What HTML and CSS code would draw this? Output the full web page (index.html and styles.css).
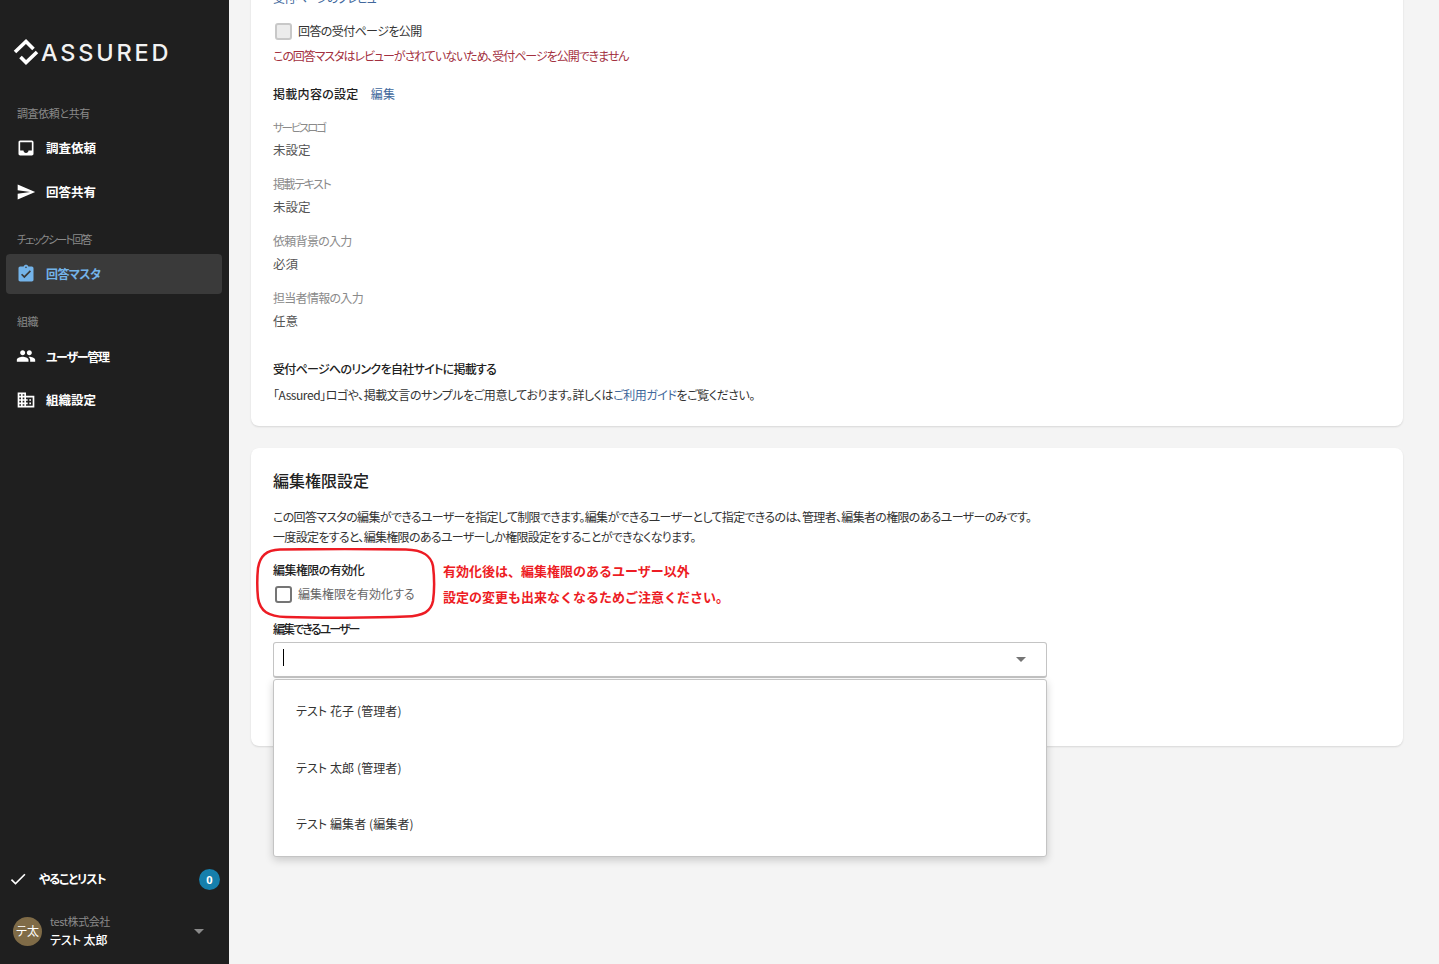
FILE: index.html
```html
<!DOCTYPE html>
<html lang="ja">
<head>
<meta charset="utf-8">
<title>回答マスタ</title>
<link rel="stylesheet" href="styles.css">
</head>
<body>
<div class="app">
  <aside class="sidebar">
    <div class="logo">
      <svg class="logo-mark" viewBox="0 0 26 26" width="26" height="26"><path d="M2 13 13 2.500 20.500 10M7.500 18 13 23.500 24 13" fill="none" stroke="#fff" stroke-width="3.6"/></svg>
      <span class="logo-text">ASSURED</span>
    </div>
    <nav class="nav">
      <div class="nav-label first">調査依頼と共有</div>
      <a class="nav-item"><svg class="nav-icon" viewBox="0 0 24 24"><path d="M19 3H4.99c-1.11 0-1.98.89-1.98 2L3 19c0 1.1.88 2 1.99 2H19c1.1 0 2-.9 2-2V5c0-1.11-.9-2-2-2zm0 12h-4c0 1.66-1.35 3-3 3s-3-1.34-3-3H4.99V5H19v10z"/></svg><span class="nav-text">調査依頼</span></a>
      <a class="nav-item"><svg class="nav-icon" viewBox="0 0 24 24"><path d="M2.01 21L23 12 2.01 3 2 10l15 2-15 2z"/></svg><span class="nav-text">回答共有</span></a>
      <div class="nav-label kana">チェックシート回答</div>
      <a class="nav-item active"><svg class="nav-icon" viewBox="0 0 24 24"><path d="M19 3h-4.18C14.4 1.84 13.3 1 12 1c-1.3 0-2.4.84-2.82 2H5c-1.1 0-2 .9-2 2v14c0 1.1.9 2 2 2h14c1.1 0 2-.9 2-2V5c0-1.1-.9-2-2-2zm-7 0c.55 0 1 .45 1 1s-.45 1-1 1-1-.45-1-1 .45-1 1-1zm-2 14l-4-4 1.41-1.41L10 14.17l6.59-6.59L18 9l-8 8z"/></svg><span class="nav-text master">回答マスタ</span></a>
      <div class="nav-label org">組織</div>
      <a class="nav-item"><svg class="nav-icon" viewBox="0 0 24 24"><path d="M16 11c1.66 0 2.99-1.34 2.99-3S17.66 5 16 5c-1.66 0-3 1.34-3 3s1.34 3 3 3zm-8 0c1.66 0 2.99-1.34 2.99-3S9.66 5 8 5C6.34 5 5 6.34 5 8s1.34 3 3 3zm0 2c-2.33 0-7 1.17-7 3.5V19h14v-2.5c0-2.33-4.67-3.5-7-3.5zm8 0c-.29 0-.62.02-.97.05 1.16.84 1.97 1.97 1.97 3.45V19h6v-2.5c0-2.33-4.67-3.5-7-3.5z"/></svg><span class="nav-text users-text">ユーザー管理</span></a>
      <a class="nav-item"><svg class="nav-icon" viewBox="0 0 24 24"><path d="M12 7V3H2v18h20V7H12zM6 19H4v-2h2v2zm0-4H4v-2h2v2zm0-4H4V9h2v2zm0-4H4V5h2v2zm4 12H8v-2h2v2zm0-4H8v-2h2v2zm0-4H8V9h2v2zm0-4H8V5h2v2zm10 12h-8v-2h2v-2h-2v-2h2v-2h-2V9h8v10zm-2-8h-2v2h2v-2zm0 4h-2v2h2v-2z"/></svg><span class="nav-text">組織設定</span></a>
    </nav>
    <div class="side-bottom">
      <div class="todo">
        <svg class="todo-icon" viewBox="0 0 24 24"><path d="M9 16.17L4.83 12l-1.41 1.41L9 19 21 7l-1.41-1.41z"/></svg>
        <span class="todo-text">やることリスト</span>
        <span class="badge">0</span>
      </div>
      <div class="account">
        <span class="avatar">テ太</span>
        <div class="account-text">
          <div class="company">test株式会社</div>
          <div class="person">テスト 太郎</div>
        </div>
        <span class="caret caret-side"></span>
      </div>
    </div>
  </aside>
  <main class="main">
    <section class="card card-top">
      <a class="link clipped">受付ページのプレビュー</a>
      <label class="check-row publish-row"><span class="box disabled"></span><span class="check-label publish">回答の受付ページを公開</span></label>
      <p class="error">この回答マスタはレビューがされていないため、受付ページを公開できません</p>
      <div class="heading-row"><strong class="sub">掲載内容の設定</strong><a class="link edit">編集</a></div>
      <dl class="fields">
        <div class="field"><dt class="kana-logo">サービスロゴ</dt><dd>未設定</dd></div>
        <div class="field"><dt class="kana-text">掲載テキスト</dt><dd>未設定</dd></div>
        <div class="field"><dt>依頼背景の入力</dt><dd>必須</dd></div>
        <div class="field"><dt>担当者情報の入力</dt><dd>任意</dd></div>
      </dl>
      <strong class="sub site">受付ページへのリンクを自社サイトに掲載する</strong>
      <p class="guide">「Assured」ロゴや、掲載文言のサンプルをご用意しております。詳しくは<a class="link">ご利用ガイド</a>をご覧ください。</p>
    </section>
    <section class="card card-perm">
      <h2 class="title">編集権限設定</h2>
      <p class="desc">この回答マスタの編集ができるユーザーを指定して制限できます。編集ができるユーザーとして指定できるのは、管理者、編集者の権限のあるユーザーのみです。<br>一度設定をすると、編集権限のあるユーザーしか権限設定をすることができなくなります。</p>
      <div class="small-label enable">編集権限の有効化</div>
      <label class="check-row perm"><span class="box"></span><span class="check-label">編集権限を有効化する</span></label>
      <div class="small-label users">編集できるユーザー</div>
      <div class="select-wrap">
        <div class="select"><span class="cursor"></span><span class="caret"></span></div>
        <ul class="menu">
          <li>テスト 花子 (管理者)</li>
          <li>テスト 太郎 (管理者)</li>
          <li>テスト 編集者 (編集者)</li>
        </ul>
      </div>
      <svg class="oval" viewBox="0 0 180 71" width="180" height="71"><path d="M24 1.500C60 1 118 1 150 1.500C168 2 175 8 177 18C178.500 30 178.500 42 177 53C175 63 168 68 150 68.500C118 70 60 70 30 69C12 68.500 4 63 2 50C1 40 1 30 2 20C4 8 10 2 24 1.500Z" fill="none" stroke="#ed1c24" stroke-width="2.500"/></svg>
      <div class="note"><p>有効化後は、編集権限のあるユーザー以外</p><p>設定の変更も出来なくなるためご注意ください。</p></div>
    </section>
  </main>
</div>
</body>
</html>
```
FILE: styles.css
```css
* { box-sizing: border-box; }
html, body { margin: 0; height: 100%; }
body {
  font-family: "Noto Sans CJK JP", "Noto Sans", sans-serif;
  font-feature-settings: "palt";
  font-size: 12px;
  color: #212121;
  background: #f4f4f4;
  overflow: hidden;
}
p, h2, dl, dd, ul { margin: 0; padding: 0; }
.app { display: flex; height: 964px; }

.sidebar {
  width: 229px;
  flex: none;
  background: #1f1f1f;
  display: flex;
  flex-direction: column;
  color: #fff;
}
.logo {
  display: flex;
  align-items: center;
  gap: 2px;
  height: 26px;
  margin: 39px 0 0 13px;
}
.logo-text {
  font-family: Inter, sans-serif;
  font-size: 23.5px;
  font-weight: 500;
  line-height: 26px;
  letter-spacing: 2.8px;
  color: #f2f2f2;
  margin-top: 2px;
}
.nav { padding: 0 7px 0 6px; }
.nav-label {
  height: 20px;
  line-height: 18px;
  padding-left: 11px;
  font-size: 11px;
  letter-spacing: -.4px;
  color: #8a8a8a;
  margin-top: 18px;
}
.nav-label.first { margin-top: 39px; }
.nav-label.kana { letter-spacing: -1.7px; }
.nav-item {
  display: flex;
  align-items: center;
  height: 40px;
  margin-top: 4px;
  padding-left: 10px;
  font-weight: 700;
  font-size: 12.5px;
  border-radius: 4px;
  color: #fff;
}
.nav-text { margin-top: -2px; }
.master { font-size: 12px; letter-spacing: -.6px; }
.users-text { font-size: 12px; letter-spacing: -1.3px; margin-top: 0; }
.nav-icon { width: 20px; height: 20px; fill: #fff; margin-right: 10px; flex: none; }
.active { background: #3a3a3a; color: #74b4ea; }
.active .nav-icon { fill: #74b4ea; }
.side-bottom { margin-top: auto; padding: 0 9px 11px 9px; }
.todo { display: flex; align-items: center; height: 24px; }
.todo-icon { width: 20px; height: 20px; fill: #fff; flex: none; margin-left: -1px; }
.todo-text { font-size: 12px; font-weight: 700; letter-spacing: -1.1px; margin-left: 11px; margin-top: -1px; }
.badge {
  margin-left: auto;
  width: 21px;
  height: 21px;
  border-radius: 50%;
  background: #167fac;
  font: 700 11px/21px "Noto Sans", sans-serif;
  text-align: center;
}
.account { display: flex; align-items: center; height: 44px; margin-top: 18px; padding-left: 4px; }
.avatar {
  width: 29px;
  height: 29px;
  border-radius: 50%;
  background: #7f6b47;
  font-size: 12px;
  line-height: 27px;
  text-align: center;
  flex: none;
}
.account-text { margin-left: 8px; margin-top: 1px; }
.company { font-size: 11px; line-height: 16px; letter-spacing: -.4px; color: #8a8a8a; }
.person { font-size: 12px; line-height: 22px; font-weight: 500; }
.caret { width: 0; height: 0; border: 5px solid transparent; border-top-color: #757575; border-bottom-width: 0; }
.caret-side { margin-left: auto; margin-right: 16px; border-top-color: #8a8a8a; }

.main { flex: 1; padding: 0 36px 0 22px; height: 964px; overflow: hidden; }
.card {
  background: #fff;
  border-radius: 8px;
  box-shadow: 0 1px 2px rgba(0,0,0,.12);
  padding-left: 22px;
  position: relative;
}
.card-top { margin-top: -30px; padding-top: 18px; padding-bottom: 21px; }
.card-perm { margin-top: 22px; padding-top: 20px; height: 298px; }
.link { color: #41689c; }
.clipped { display: block; line-height: 20px; letter-spacing: -1.1px; }
.check-row { display: flex; align-items: center; height: 24px; }
.publish-row { margin-top: 11px; }
.box {
  width: 17px;
  height: 17px;
  margin-left: 2px;
  border: 2px solid #757575;
  border-radius: 3px;
  background: #fff;
  flex: none;
}
.box.disabled { border-color: #c8c8c8; background: #ececec; }
.check-label { margin-left: 6px; color: #666; font-size: 12px; margin-top: -2px; }
.publish { color: #333; letter-spacing: -.6px; }
.error { margin-top: 3px; line-height: 20px; color: #a33040; font-size: 12px; letter-spacing: -1.05px; }
.heading-row { display: flex; gap: 12px; margin-top: 18px; line-height: 20px; }
.sub { font-weight: 500; font-size: 12px; line-height: 20px; letter-spacing: .3px; color: #212121; }
.edit { font-size: 12px; letter-spacing: .4px; }
.fields { margin-top: 13px; }
.field { margin-bottom: 14px; }
.field dt { line-height: 20px; color: #8a8a8a; font-size: 12px; letter-spacing: -.7px; }
.field dt.kana-logo { font-size: 11.500px; letter-spacing: -2.200px; }
.field dt.kana-text { letter-spacing: -1.4px; }
.field dd { margin-top: 3px; line-height: 20px; font-size: 12.500px; color: #555; }
.site { display: block; margin-top: 28px; letter-spacing: -.7px; }
.guide { margin-top: 6px; line-height: 20px; font-size: 12px; letter-spacing: -.45px; color: #333; }
.title { font-size: 16px; font-weight: 500; line-height: 24px; color: #212121; }
.desc { margin-top: 15px; line-height: 20px; font-size: 12px; letter-spacing: -.68px; color: #333; }
.small-label { font-weight: 500; line-height: 20px; font-size: 12px; letter-spacing: -.55px; color: #212121; }
.enable { margin-top: 13px; }
.perm { margin-top: 2px; }
.users { margin-top: 13px; letter-spacing: -1.9px; }
.select-wrap { position: relative; width: 774px; margin-top: 3px; }
.select {
  display: flex;
  align-items: center;
  justify-content: space-between;
  height: 36px;
  padding: 0 20px 0 9px;
  border: 1px solid #c4c4c4;
  border-bottom-width: 2px;
  border-radius: 3px;
  background: #fff;
}
.cursor { width: 1px; height: 17px; background: #000; margin-top: -5px; }
.menu {
  position: absolute;
  top: 37px;
  left: 0;
  width: 774px;
  height: 178px;
  list-style: none;
  background: #fff;
  border: 1px solid #c4c4c4;
  border-radius: 3px;
  box-shadow: 0 3px 8px rgba(0,0,0,.18);
  padding-top: 4px;
  z-index: 2;
}
.menu li { height: 56.500px; line-height: 54px; padding-left: 22px; font-size: 12px; letter-spacing: .1px; color: #333; }
.oval { position: absolute; left: 5px; top: 100px; z-index: 3; }
.note { position: absolute; left: 192px; top: 110px; color: #ed1c24; font-weight: 700; font-size: 13px; font-feature-settings: normal; }
.note p { line-height: 26px; }
```
